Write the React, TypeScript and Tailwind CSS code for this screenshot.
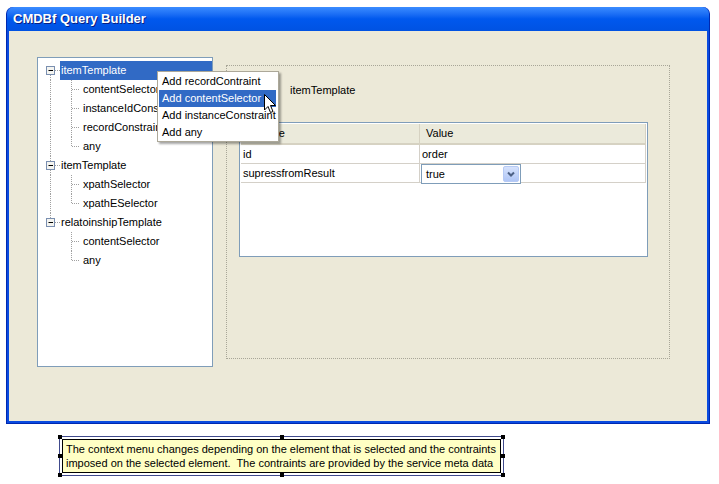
import React from "react";

type Row = {
  label: string;
  level: 0 | 1;
  selected?: boolean;
  // level-0 vertical guide continues below this row
  rootLine?: "first" | "mid" | "last";
  // level-1: is last child of its parent
  lastChild?: boolean;
  // level-1: parent has a following sibling
  parentNext?: boolean;
};

const rows: Row[] = [
  { label: "itemTemplate", level: 0, selected: true, rootLine: "first" },
  { label: "contentSelector", level: 1, parentNext: true },
  { label: "instanceIdConstraint", level: 1, parentNext: true },
  { label: "recordConstraint", level: 1, parentNext: true },
  { label: "any", level: 1, parentNext: true, lastChild: true },
  { label: "itemTemplate", level: 0, rootLine: "mid" },
  { label: "xpathSelector", level: 1, parentNext: true },
  { label: "xpathESelector", level: 1, parentNext: true, lastChild: true },
  { label: "relatoinshipTemplate", level: 0, rootLine: "last" },
  { label: "contentSelector", level: 1 },
  { label: "any", level: 1, lastChild: true },
];

const DOT = "#A0A0A0";

const MinusBox = () => (
  <g>
    <rect x="8.5" y="5.5" width="8" height="8" fill="#F4F4F0" stroke="#7A8FB0" />
    <line x1="10.5" y1="9.5" x2="15" y2="9.5" stroke="#000" />
  </g>
);

const TreeGuide = ({ row }: { row: Row }) => {
  if (row.level === 0) {
    return (
      <svg width="22" height="19" className="shrink-0">
        {row.rootLine !== "first" && (
          <line x1="12.5" y1="0" x2="12.5" y2="5" stroke={DOT} strokeDasharray="1 1" />
        )}
        {row.rootLine !== "last" && (
          <line x1="12.5" y1="14" x2="12.5" y2="19" stroke={DOT} strokeDasharray="1 1" />
        )}
        <line x1="17" y1="9.5" x2="22" y2="9.5" stroke={DOT} strokeDasharray="1 1" />
        <MinusBox />
      </svg>
    );
  }
  return (
    <svg width="44" height="19" className="shrink-0">
      {row.parentNext && (
        <line x1="12.5" y1="0" x2="12.5" y2="19" stroke={DOT} strokeDasharray="1 1" />
      )}
      <line
        x1="33.5"
        y1="0"
        x2="33.5"
        y2={row.lastChild ? 9.5 : 19}
        stroke={DOT}
        strokeDasharray="1 1"
      />
      <line x1="34" y1="9.5" x2="42" y2="9.5" stroke={DOT} strokeDasharray="1 1" />
    </svg>
  );
};

const TreePanel = () => (
  <div className="w-[176px] h-[310px] shrink-0 border border-[#7F9DB9] bg-white pt-[3px] overflow-hidden">
    {rows.map((row, i) => (
      <div key={i} className="flex items-center h-[19px] text-[11px] text-black whitespace-nowrap">
        <TreeGuide row={row} />
        {row.selected ? (
          <div className="flex-1 h-[19px] bg-[#316AC5] text-white pl-[1px] leading-[19px]">
            {row.label}
          </div>
        ) : (
          <div className="pl-[1px] leading-[19px]">{row.label}</div>
        )}
      </div>
    ))}
  </div>
);

const ComboArrow = () => (
  <div className="w-[16px] h-[16px] mr-[1px] rounded-[2px] bg-gradient-to-b from-[#D6E2FC] to-[#B0C6F6] border border-[#B6CAF5] flex items-center justify-center">
    <svg width="8" height="6" viewBox="0 0 8 6">
      <path d="M1 1.5 L4 4.5 L7 1.5" fill="none" stroke="#4D6185" strokeWidth="2" />
    </svg>
  </div>
);

const AttrTable = () => (
  <div className="ml-[12px] mt-[25px] w-[409px] h-[135px] border border-[#7F9DB9] bg-white p-[1px] text-[11px] text-black">
    <div className="flex h-[21px] bg-[#EBEADB] border-b-[2px] border-[#D6D2C2] w-[405px]">
      <div className="w-[179px] pl-[3px] leading-[19px] border-r border-[#D6D2C2]">Attribute</div>
      <div className="flex-1 pl-[6px] leading-[19px] border-r border-[#D6D2C2]">Value</div>
    </div>
    <div className="flex h-[19px] border-b border-[#D4D0C8] w-[405px]">
      <div className="w-[179px] pl-[2px] leading-[19px] border-r border-[#D4D0C8]">id</div>
      <div className="flex-1 pl-[2px] leading-[19px] border-r border-[#D4D0C8]">order</div>
    </div>
    <div className="flex h-[19px] border-b border-[#D4D0C8] w-[405px]">
      <div className="w-[179px] pl-[2px] leading-[19px] border-r border-[#D4D0C8]">supressfromResult</div>
      <div className="flex-1 border-r border-[#D4D0C8] flex items-start">
        <div className="ml-[1px] w-[100px] h-[20px] border border-[#7F9DB9] bg-white flex items-center justify-between pl-[4px]">
          <span>true</span>
          <ComboArrow />
        </div>
      </div>
    </div>
  </div>
);

const ContextMenu = () => (
  <div className="absolute left-[148px] top-[40px] w-[122px] h-[71px] bg-white border border-[#ACA899] shadow-[2px_2px_2px_rgba(0,0,0,0.35)] p-[1px] text-[11px] text-black">
    {["Add recordContraint", "Add contentSelector", "Add instanceConstraint", "Add any"].map(
      (item, i) => (
        <div
          key={item}
          className={
            "h-[17px] leading-[17px] pl-[3px] mr-[1px] whitespace-nowrap " +
            (i === 1 ? "bg-[#316AC5] text-white" : "")
          }
        >
          {item}
        </div>
      )
    )}
  </div>
);

const Cursor = () => (
  <svg
    className="absolute left-[255px] top-[63px]"
    width="13"
    height="20"
    viewBox="0 0 13 20"
  >
    <path
      d="M0.5 0.5 L0.5 16 L4 12.5 L6.5 18.5 L9 17.5 L6.5 11.5 L11.5 11.5 Z"
      fill="#fff"
      stroke="#000"
      strokeWidth="1"
      strokeLinejoin="miter"
    />
  </svg>
);

const Handle = ({ className }: { className: string }) => (
  <div className={"absolute w-[4px] h-[4px] bg-black " + className} />
);

export default function App() {
  return (
    <div
      className="w-[719px] h-[484px] bg-white overflow-hidden"
      style={{ fontFamily: '"Liberation Sans", Arial, sans-serif' }}
    >
      <div className="ml-[6px] mt-[7px] w-[704px] h-[417px] flex flex-col rounded-t-[7px] bg-[#0A4BE0] border-b border-x border-[#0028B0]">
        <div className="h-[24px] shrink-0 rounded-t-[7px] bg-gradient-to-b from-[#3B8CFF] via-[#0058EE] to-[#0052E2] flex items-center pl-[6px]">
          <span className="text-white font-bold text-[13px] [text-shadow:1px_1px_0_#0A1E80]">
            CMDBf Query Builder
          </span>
        </div>
        <div className="flex-1 mx-[2px] mb-[2px] bg-[#ECE9D8] relative">
          <div className="flex pl-[28px] pt-[26px]">
            <TreePanel />
            <div className="ml-[13px] mt-[8px] w-[444px] h-[294px] border border-dotted border-[#A8A698]">
              <div className="ml-[63px] mt-[18px] text-[11px] text-black leading-[13px]">itemTemplate</div>
              <AttrTable />
            </div>
          </div>
          <ContextMenu />
          <Cursor />
        </div>
      </div>

      <div className="relative ml-[59px] mt-[12px] w-[445px] h-[40px] border border-[#404A8C] p-[2px] bg-white">
        <div className="w-full h-full border border-black bg-[#FFFFC4] pl-[3px] pt-[2px] text-[11px] leading-[14px] text-black whitespace-nowrap">
          The context menu changes depending on the element that is selected and the contraints
          <br />
          imposed on the selected element.&nbsp; The contraints are provided by the service meta data
        </div>
        <Handle className="-left-[2px] -top-[2px]" />
        <Handle className="left-[220px] -top-[2px]" />
        <Handle className="-right-[2px] -top-[2px]" />
        <Handle className="-left-[2px] top-[17px]" />
        <Handle className="-right-[2px] top-[17px]" />
        <Handle className="-left-[2px] -bottom-[2px]" />
        <Handle className="left-[220px] -bottom-[2px]" />
        <Handle className="-right-[2px] -bottom-[2px]" />
      </div>
    </div>
  );
}
